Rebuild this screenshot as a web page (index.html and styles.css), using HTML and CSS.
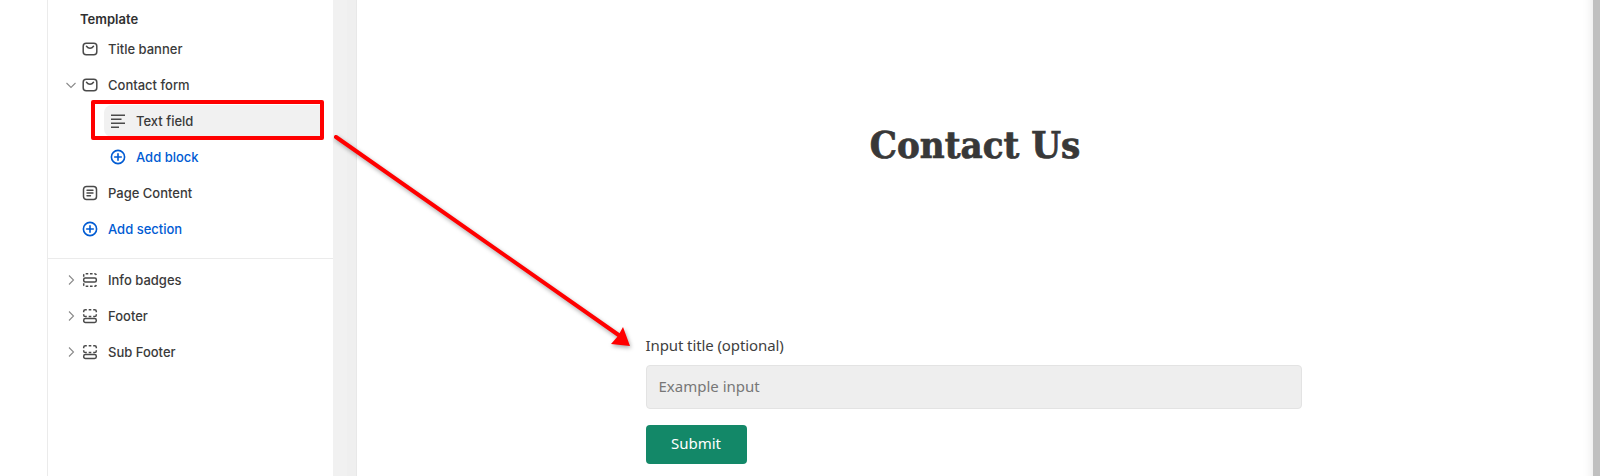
FILE: index.html
```html
<!DOCTYPE html>
<html lang="en">
<head>
    <meta charset="UTF-8">
    <title>Contact Us</title>
    <link rel="stylesheet" href="styles.css">
</head>
<body>
    <svg class="defs" width="0" height="0">
        <symbol id="i-header" viewBox="0 0 20 20">
            <rect x="3.200" y="4.300" width="13.600" height="11.400" rx="3" fill="none" stroke="currentColor" stroke-width="1.500"/>
            <path d="M6.500 7.300c.9 1.200 2.100 1.900 3.500 1.900s2.600-.7 3.500-1.900" fill="none" stroke="currentColor" stroke-width="1.500" stroke-linecap="round"/>
        </symbol>
        <symbol id="i-page" viewBox="0 0 20 20">
            <rect x="3.500" y="3.500" width="13" height="13" rx="3" fill="none" stroke="currentColor" stroke-width="1.500"/>
            <path d="M7 7.300h6M7 10h6M7 12.700h3.500" fill="none" stroke="currentColor" stroke-width="1.400" stroke-linecap="round"/>
        </symbol>
        <symbol id="i-lines" viewBox="0 0 20 20">
            <path d="M3 4.200h14M3 8.200h10.500M3 12.200h14M3 16.200h8" fill="none" stroke="currentColor" stroke-width="1.500"/>
        </symbol>
        <symbol id="i-plus" viewBox="0 0 20 20">
            <circle cx="10" cy="10" r="6.600" fill="none" stroke="currentColor" stroke-width="1.600"/>
            <path d="M10 6.700v6.600M6.700 10h6.600" fill="none" stroke="currentColor" stroke-width="1.600" stroke-linecap="round"/>
        </symbol>
        <symbol id="i-badges" viewBox="0 0 20 20">
            <path d="M3.700 6.800v-1.400c0-1 .7-1.700 1.700-1.700h9.200c1 0 1.700.7 1.700 1.700v1.400M3.700 13.200v1.400c0 1 .7 1.700 1.700 1.700h9.200c1 0 1.700-.7 1.700-1.700v-1.400" fill="none" stroke="currentColor" stroke-width="1.500" stroke-dasharray="2.600 1.700"/>
            <rect x="3.700" y="7.900" width="12.600" height="4.200" rx="1.500" fill="none" stroke="currentColor" stroke-width="1.500"/>
        </symbol>
        <symbol id="i-footer" viewBox="0 0 20 20">
            <path d="M3.700 6.300v-1c0-1 .7-1.600 1.700-1.600h1.400M8.700 3.700h2.600M13.200 3.700h1.400c1 0 1.700.6 1.700 1.600v1M3.700 8.300v.6c0 1 .7 1.600 1.700 1.600h1.400M8.700 10.500h2.600M13.200 10.500h1.400c1 0 1.700-.6 1.700-1.600v-.6" fill="none" stroke="currentColor" stroke-width="1.500"/>
            <rect x="3.700" y="12.600" width="12.600" height="3.800" rx="1.700" fill="none" stroke="currentColor" stroke-width="1.500"/>
        </symbol>
        <symbol id="i-down" viewBox="0 0 16 16">
            <path d="M3.500 6l4.500 4.500 4.500-4.500" fill="none" stroke="currentColor" stroke-width="1.100"/>
        </symbol>
        <symbol id="i-right" viewBox="0 0 16 16">
            <path d="M6 3.500l4.500 4.500-4.500 4.500" fill="none" stroke="currentColor" stroke-width="1.100"/>
        </symbol>
    </svg>

    <div class="page">
        <aside class="sidebar">
            <div class="groupTitle">Template</div>
            <ul class="tree">
                <li class="row"><span class="chev"></span><svg class="icon"><use href="#i-header"/></svg>Title banner</li>
                <li class="row"><span class="chev"><svg><use href="#i-down"/></svg></span><svg class="icon"><use href="#i-header"/></svg>Contact form</li>
                <li class="row child selected"><svg class="icon"><use href="#i-lines"/></svg>Text field</li>
                <li class="row child add"><svg class="icon"><use href="#i-plus"/></svg>Add block</li>
                <li class="row"><span class="chev"></span><svg class="icon"><use href="#i-page"/></svg>Page Content</li>
                <li class="row add"><span class="chev"></span><svg class="icon"><use href="#i-plus"/></svg>Add section</li>
            </ul>
            <ul class="tree lower">
                <li class="row"><span class="chev"><svg><use href="#i-right"/></svg></span><svg class="icon"><use href="#i-badges"/></svg>Info badges</li>
                <li class="row"><span class="chev"><svg><use href="#i-right"/></svg></span><svg class="icon"><use href="#i-footer"/></svg>Footer</li>
                <li class="row"><span class="chev"><svg><use href="#i-right"/></svg></span><svg class="icon"><use href="#i-footer"/></svg>Sub Footer</li>
            </ul>
        </aside>

        <div class="gutter"></div>

        <main class="preview">
            <h1>Contact Us</h1>
            <form class="contactForm">
                <label for="field">Input title (optional)</label>
                <input id="field" type="text" placeholder="Example input">
                <button type="button">Submit</button>
            </form>
        </main>

        <div class="scrollbar"></div>
    </div>

    <!-- annotation drawn on top of the screenshot -->
    <div class="redBox"></div>
    <svg class="arrow" width="1600" height="476">
        <path d="M336 137L620 336" fill="none" stroke="#f00" stroke-width="4" stroke-linecap="round"/>
        <path d="M630 346L611 344L618 336L623 327Z" fill="#f00"/>
    </svg>
</body>
</html>
```

FILE: styles.css
```css
* {
    box-sizing: border-box;
}

html, body {
    height: 100%;
}

body {
    margin: 0;
    overflow: hidden;
    background: #fff;
    font-family: Inter, "Liberation Sans", sans-serif;
    color: #3a3a3a;
}

.defs {
    position: absolute;
}

.page {
    display: flex;
    height: 476px;
    padding-left: 47px;
}

.sidebar {
    width: 286px;
    border-left: 1px solid #ebebeb;
    font-size: 13px;
    line-height: 18px;
    font-weight: 550;
    flex-shrink: 0;
}

.groupTitle {
    height: 31px;
    padding: 11px 0 0 32px;
    font-size: 13px;
    line-height: 16px;
    font-weight: 600;
    color: #303030;
}

.tree {
    list-style: none;
    margin: 0;
    padding: 0 0 11px;
    border-bottom: 1px solid #ebebeb;
}

.tree.lower {
    padding: 3px 0 0;
    border-bottom: 0;
}

.row {
    display: flex;
    align-items: center;
    gap: 8px;
    height: 36px;
    padding-left: 15px;
}

.chev {
    width: 16px;
    height: 16px;
    margin-right: -7px;
    margin-top: -1px;
    color: #8a8a8a;
}

.chev svg {
    display: block;
    width: 16px;
    height: 16px;
}

.icon {
    width: 20px;
    height: 20px;
    flex-shrink: 0;
    color: #4a4a4a;
}

.row.child {
    padding-left: 60px;
}

.row.selected {
    height: 32px;
    margin: 2px 13px 2px 56px;
    padding-left: 4px;
    background: #f1f1f1;
    border-radius: 8px 0 0 8px;
}

.row.add {
    color: #005bd3;
}

.row.add .icon {
    color: #005bd3;
}

.gutter {
    width: 24px;
    flex-shrink: 0;
    background: #f1f1f1;
    border-right: 1px solid #e8e8e8;
    box-shadow: inset -9px 0 0 #efefef;
}

.preview {
    flex: 1;
    min-width: 0;
    padding-right: 3px;
    display: flex;
    flex-direction: column;
    align-items: center;
    font-family: "Noto Sans", sans-serif;
    box-shadow: inset -14px 0 12px -14px #e4e4e4;
}

.preview h1 {
    margin: 121px 0 0 3px;
    height: 48px;
    font-family: "DejaVu Serif Condensed", "DejaVu Serif", serif;
    font-size: 38px;
    line-height: 48px;
    font-weight: 700;
    color: #383838;
    -webkit-text-stroke: .7px #383838;
}

.contactForm {
    width: 656px;
    margin-top: 166px;
    display: flex;
    flex-direction: column;
    align-items: flex-start;
}

.contactForm label {
    font-size: 15px;
    line-height: 20px;
    letter-spacing: -.1px;
    color: #3f3f3f;
    margin-bottom: 10px;
}

.contactForm input {
    width: 100%;
    height: 44px;
    padding: 0 12px 2px;
    border: 1px solid #e3e3e3;
    border-radius: 4px;
    background: #eee;
    font: 15px "Noto Sans", sans-serif;
}

.contactForm input::placeholder {
    color: #777;
    opacity: 1;
}

.contactForm button {
    width: 101px;
    height: 39px;
    margin-top: 16px;
    padding-bottom: 4px;
    border: 0;
    border-radius: 4px;
    background: #138868;
    color: #fff;
    font: 15px "Noto Sans", sans-serif;
}

.scrollbar {
    width: 7px;
    flex-shrink: 0;
    background: #c0c0c0;
}

.redBox {
    position: absolute;
    left: 91px;
    top: 100px;
    width: 233px;
    height: 40px;
    border: 4px solid #f00;
    border-radius: 2px;
}

.arrow {
    position: absolute;
    left: 0;
    top: 0;
    pointer-events: none;
    filter: drop-shadow(1px 2px 2px rgba(0, 0, 0, .35));
}
```
